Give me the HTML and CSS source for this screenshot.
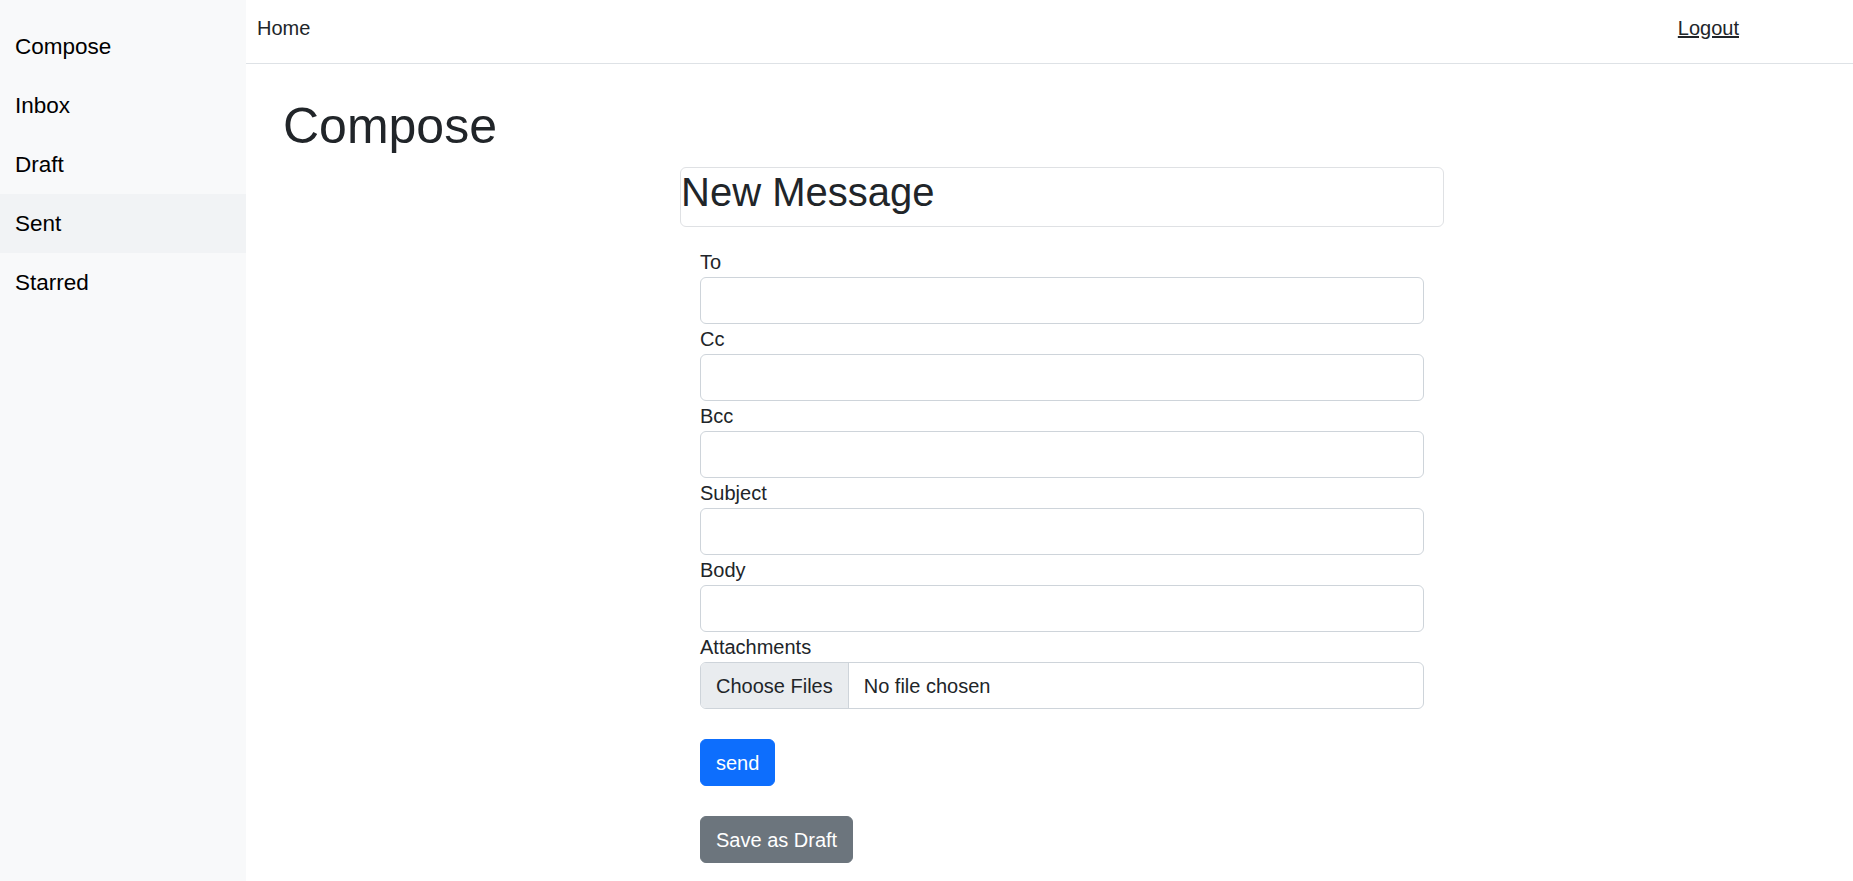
FILE: index.html
```html
<!DOCTYPE html>
<html lang="en">
<head>
<meta charset="utf-8">
<title>Compose</title>
<link rel="stylesheet" href="styles.css">
</head>
<body>
<div class="layout">
  <aside class="sidebar">
    <nav class="side-nav">
      <a class="side-link" href="#">Compose</a>
      <a class="side-link" href="#">Inbox</a>
      <a class="side-link" href="#">Draft</a>
      <a class="side-link active" href="#">Sent</a>
      <a class="side-link" href="#">Starred</a>
    </nav>
  </aside>
  <div class="main">
    <header class="topbar">
      <a class="home-link" href="#">Home</a>
      <a class="logout-link" href="#">Logout</a>
    </header>
    <main class="content">
      <h1 class="page-title">Compose</h1>
      <div class="compose-wrap">
        <div class="card">
          <h2 class="card-title">New Message</h2>
        </div>
        <form class="compose-form">
          <label class="field-label" for="to">To</label>
          <input class="field-input" id="to" type="text">
          <label class="field-label" for="cc">Cc</label>
          <input class="field-input" id="cc" type="text">
          <label class="field-label" for="bcc">Bcc</label>
          <input class="field-input" id="bcc" type="text">
          <label class="field-label" for="subject">Subject</label>
          <input class="field-input" id="subject" type="text">
          <label class="field-label" for="body">Body</label>
          <input class="field-input" id="body" type="text">
          <span class="field-label">Attachments</span>
          <div class="file-box">
            <span class="file-btn">Choose Files</span>
            <span class="file-name">No file chosen</span>
          </div>
          <div class="btn-row"><button class="btn btn-primary" type="button">send</button></div>
          <div class="btn-row"><button class="btn btn-secondary" type="button">Save as Draft</button></div>
        </form>
      </div>
    </main>
  </div>
</div>
</body>
</html>
```
FILE: styles.css
```css
* { box-sizing: border-box; }
html, body {
  margin: 0;
  padding: 0;
  height: 100%;
}
body {
  font-family: "Liberation Sans", Arial, sans-serif;
  font-size: 20px;
  line-height: 30px;
  color: #212529;
  background: #fff;
  overflow: hidden;
}
.layout {
  display: flex;
  min-height: 881px;
}
.sidebar {
  width: 246px;
  flex: 0 0 246px;
  background: #f8f9fa;
  padding-top: 17px;
}
.side-nav {
  display: flex;
  flex-direction: column;
}
.side-link {
  display: block;
  padding: 13px 15px;
  font-size: 22.5px;
  line-height: 33px;
  color: #000;
  text-decoration: none;
}
.side-link.active {
  background: #f1f3f5;
}
.main {
  flex: 1;
  display: flex;
  flex-direction: column;
}
.topbar {
  height: 64px;
  border-bottom: 1px solid #dee2e6;
  display: flex;
  align-items: flex-start;
  padding: 13px 114px 0 11px;
}
.home-link {
  color: #212529;
  text-decoration: none;
}
.logout-link {
  margin-left: auto;
  color: #212529;
  text-decoration: underline;
}
.content {
  padding: 32px 0 0 37px;
}
.page-title {
  margin: 0 0 11px;
  font-size: 50px;
  line-height: 60px;
  font-weight: 400;
}
.compose-wrap {
  width: 764px;
  margin-left: 397px;
}
.card {
  border: 1px solid #dfe1e4;
  border-radius: 6px;
}
.card-title {
  margin: 0 0 10px;
  font-size: 40px;
  line-height: 48px;
  font-weight: 400;
}
.compose-form {
  padding: 20px 20px 0;
}
.field-label {
  display: block;
  line-height: 30px;
}
.field-input {
  display: block;
  width: 100%;
  height: 47px;
  border: 1px solid #ced4da;
  border-radius: 6px;
  padding: 7.5px 15px;
  font: inherit;
  color: #212529;
  background: #fff;
}
.file-box {
  display: flex;
  height: 47px;
  border: 1px solid #ced4da;
  border-radius: 6px;
  overflow: hidden;
}
.file-btn {
  background: #e9ecef;
  padding: 7.5px 15px;
  border-right: 1px solid #ced4da;
  line-height: 30px;
}
.file-name {
  padding: 7.5px 15px;
  line-height: 30px;
}
.btn-row {
  margin-top: 30px;
}
.btn {
  font: inherit;
  line-height: 30px;
  padding: 7.5px 15px;
  border: 1px solid transparent;
  border-radius: 6px;
  color: #fff;
  cursor: pointer;
}
.btn-primary {
  background: #0d6efd;
  border-color: #0d6efd;
}
.btn-secondary {
  background: #6c757d;
  border-color: #6c757d;
}
```
